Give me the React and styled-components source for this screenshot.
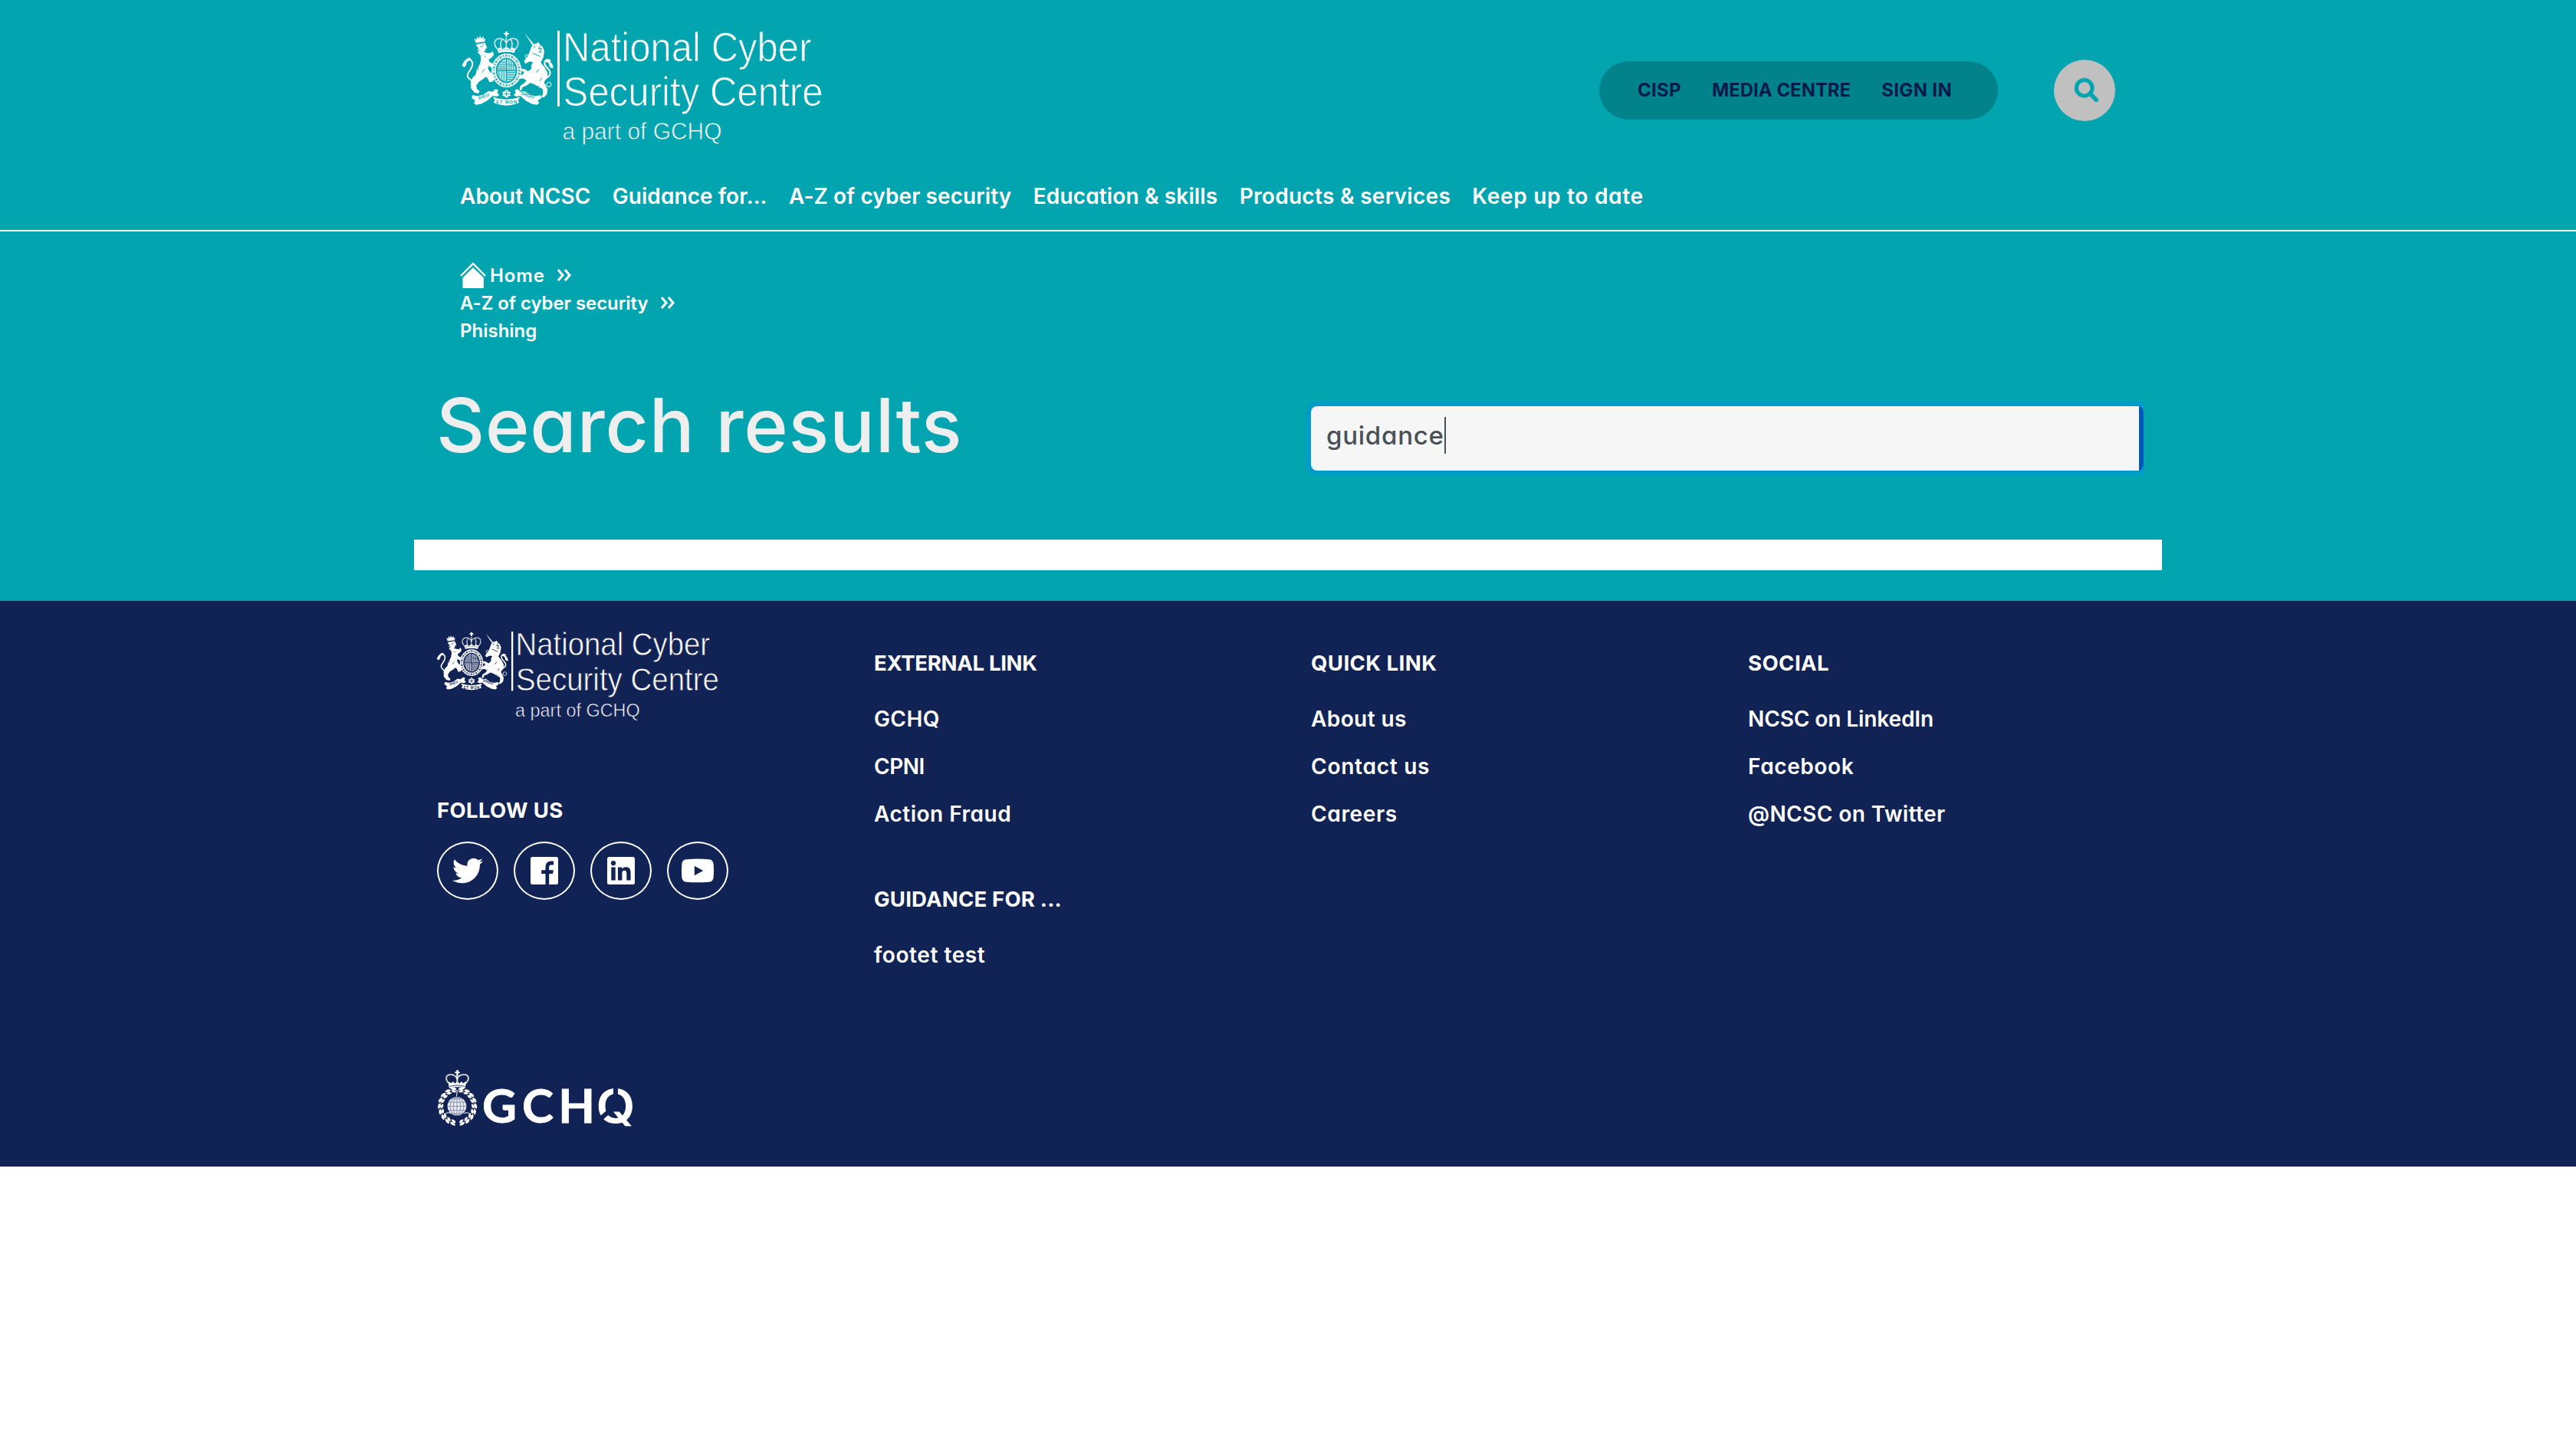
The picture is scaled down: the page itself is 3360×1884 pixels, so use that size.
import React from "react";
import styled, { createGlobalStyle } from "styled-components";
import { FaTwitter } from "react-icons/fa";

const teal = "#02a4b0";
const navy = "#112254";

const GlobalStyle = createGlobalStyle`
  *, *::before, *::after { box-sizing: border-box; }
  body {
    margin: 0;
    background: #fff;
    font-family: Inter, "Liberation Sans", sans-serif;
    font-feature-settings: "cv11" 1;
  }
`;

/* ---------- layout ---------- */

const Page = styled.div`
  display: flex;
  flex-direction: column;
`;

const Container = styled.div`
  width: 2280px;
  margin: 0 auto;
`;

const Header = styled.header`
  height: 302px;
  background: ${teal};
  border-bottom: 2px solid #fff;
`;

const TopRow = styled.div`
  display: flex;
  justify-content: space-between;
  align-items: center;
  height: 235px;
  padding: 40px 61px 39px 63px;
`;

const Actions = styled.div`
  display: flex;
  align-items: center;
  gap: 73px;
`;

const Pill = styled.nav`
  display: flex;
  align-items: center;
  gap: 40px;
  width: 520px;
  height: 76px;
  padding-left: 50px;
  border-radius: 38px;
  background: #02838c;
`;

const PillLink = styled.a`
  color: #001a4b;
  font-size: 23.8px;
  font-weight: 700;
  line-height: 36px;
  letter-spacing: ${(p) => p.$track}px;
  white-space: nowrap;
`;

const SearchButton = styled.button`
  width: 80px;
  height: 80px;
  padding: 0;
  border: 0;
  border-radius: 50%;
  background: #c0c0c0;
  svg { display: block; }
`;

const MainNav = styled.nav`
  display: flex;
  gap: 28.3px;
  padding-left: 60px;
`;

const NavLink = styled.a`
  color: #fff;
  font-size: 28px;
  font-weight: 600;
  line-height: 42px;
  letter-spacing: ${(p) => p.$track}px;
  white-space: nowrap;
`;

const Main = styled.main`
  height: 482px;
  padding-top: 39px;
  background: ${teal};
`;

const Crumbs = styled.ol`
  margin: 0;
  padding: 0 0 0 60px;
  list-style: none;
`;

const Crumb = styled.li`
  display: flex;
  align-items: center;
  height: 36px;
  color: #fff;
  font-size: 24px;
  font-weight: 600;
  letter-spacing: ${(p) => p.$track}px;
  svg { flex: none; }
`;

const HomeIcon = styled.svg`
  margin-right: 5px;
`;

const Chevrons = styled.svg`
  margin-left: 15px;
`;

const TitleRow = styled.div`
  display: flex;
  padding: 51px 24px 0 29px;
`;

const Title = styled.h1`
  width: 1141px;
  margin: 0;
  color: #eee;
  font-size: 98px;
  font-weight: 500;
  line-height: 110px;
  letter-spacing: 0.75px;
  white-space: nowrap;
`;

const SearchField = styled.div`
  display: flex;
  width: 1086px;
  height: 84px;
  margin-top: 30px;
`;

const FieldBox = styled.div`
  display: flex;
  align-items: center;
  width: 1080px;
  padding: 0 18px 8px 20px;
  border-radius: 8px 0 0 8px;
  background: #f6f6f6;
  box-shadow: 0 0 0 6px #009bc9;
  color: #495057;
  font-size: 33px;
  font-weight: 500;
  letter-spacing: 0.75px;
`;

const Caret = styled.span`
  width: 2px;
  height: 48px;
  background: #495057;
`;

const FieldEdge = styled.span`
  z-index: 1;
  width: 6px;
  border-radius: 0 8px 8px 0 / 0 14px 14px 0;
  background: #0058b6;
`;

const ResultsPanel = styled.section`
  width: 2280px;
  height: 40px;
  margin-top: 90px;
  background: #fff;
`;

const Footer = styled.footer`
  height: 738px;
  background: ${navy};
  color: #fff;
`;

const Columns = styled.div`
  display: grid;
  grid-template-columns: repeat(4, 570px);
  height: 612px;
`;

const Brand = styled.div`
  padding: 40px 30px 0;
`;

const Column = styled.div`
  display: flex;
  flex-direction: column;
  gap: 69px;
  padding: 60px 0 0 30px;
`;

const Heading = styled.h2`
  margin: ${(p) => p.$margin || "0 0 31px"};
  font-size: 27.5px;
  font-weight: 700;
  line-height: 42px;
  letter-spacing: ${(p) => p.$track}px;
  text-transform: uppercase;
  white-space: nowrap;
`;

const LinkList = styled.ul`
  display: flex;
  flex-direction: column;
  gap: 20px;
  margin: 0;
  padding: 0;
  list-style: none;
`;

const FooterLink = styled.a`
  display: block;
  font-size: 28px;
  font-weight: 600;
  line-height: 42px;
  letter-spacing: ${(p) => p.$track}px;
  white-space: nowrap;
`;

const Socials = styled.div`
  display: flex;
  gap: 20px;
`;

const SocialLink = styled.a`
  display: flex;
  align-items: center;
  justify-content: center;
  width: 80px;
  height: 76px;
  border: 2px solid #fff;
  border-radius: 50%;
  color: #fff;
`;

const BottomRow = styled.div`
  padding-left: 30px;
`;

const LogoSvg = styled.svg`
  display: block;
  overflow: visible;
  font-family: "Liberation Sans", Arial, sans-serif;
`;

const GchqSvg = styled.svg`
  display: block;
  overflow: visible;
  font-family: Lato, "Open Sans", sans-serif;
  font-weight: 700;
`;

/* ---------- drawings ---------- */

function Crest({ bg }) {
  return (
    <g transform="translate(-13 -10) scale(.33333)" fill="#fff" stroke="none">
      {/* lion */}
      <path d="M86 60l8 6 4-13 7 9 3-13 6 12 8-9 1 13 7-5-3 13-35 5z" />
      <path d="M93 84l34-7 5 10 4 12-8 2 2 8-9 3 14 5 16 1 3-7 6 4 2 10-8 10-12 8 4 10 14 7 9 12-14 4-14-9-1 13 7 11 13 9 4 15-5 14-14 3-5-13-8-9-12 10-16 10-10 14 2 14 11 9-5 9-16-4-13-17-1-25 8-17 11-10 4-19 14-25 3-21-6-17-8-4 6-6-7-6 6-7-7-6z" />
      <path d="M77 226c-12-8-20-14-17-25 4-14 18-22 19-39 1-14-9-22-18-17-8 5-10 13-9 20" fill="none" stroke="#fff" strokeWidth="6" />
      <path d="M38 165c7-14 16-27 29-29 7 1 5 9-1 12-10 3-14 12-15 23-5 3-10 0-13-6z" />
      <path d="M118 82l6 4M109 93l11-2M101 104l8 3M113 126l-3 8M127 128l2 7M103 175l-6 12M125 180l-8 14" stroke={bg} strokeWidth="2.5" />
      {/* unicorn */}
      <path d="M283 40l37 44-7 3z" />
      <path d="M311 90l9-7 13-4 3-5 6 9 12 11 6 16-4 25-10 20 15 18 12 22-1 18-13 18 5 14 9 15-3 19-11 12-12 1 7-13 1-17-13-13-21-9-16-5-13 9-17 7-5 13-7-2 3-16 16-11 8-11-14-7-15 3-3 9-9-5 3-12 18-7 11-9-6-8-14 3-10 4-3-7 17-9 18 1 14 9 12-10 1-16 6-10-14-2-15 8-6-6 2-9 12-12z" />
      <path d="M356 219c18-4 30-15 26-28-5-15-21-20-21-33 0-13 12-20 23-9" fill="none" stroke="#fff" strokeWidth="6" />
      <path d="M395 176c-1-15-10-27-25-33-8-1-8 7-2 10 10 2 13 9 12 18 5 5 12 7 15 5z" />
      <path d="M318 94l7-2M314 118l30 13M344 88l-7 14 13-2-10 14 12 0M338 181l-9 13M350 214l-8 13" fill="none" stroke={bg} strokeWidth="3" />
      <g fill="none" stroke="#fff" strokeWidth="3">
        <circle cx="291" cy="130" r="6" /><circle cx="302" cy="140" r="5" />
        <circle cx="331" cy="239" r="6" /><circle cx="344" cy="247" r="6" /><circle cx="378" cy="241" r="9" /><circle cx="360" cy="247" r="6" />
      </g>
      {/* crown */}
      <path d="M208 33h7v6h6v6h-6v8h-7v-8h-6v-6h6z" />
      <path d="M180 104c-20-14-19-43 5-43 15 0 24 9 26 18 3-9 12-18 28-18 23 0 24 29 5 43M211 57v46M195 66c-8 8-7 20-3 32M228 66c8 8 7 20 3 32" fill="none" stroke="#fff" strokeWidth="5" strokeDasharray="4 1.2" />
      <path d="M176 101l13-6 8 7 14-9 15 9 8-7 13 6-4 16q-32-7-63 0z" />
      <path d="M183 108q28-7 57 0" fill="none" stroke={bg} strokeWidth="2.5" strokeDasharray="6 4" />
      {/* garter and shield */}
      <ellipse cx="212" cy="186" rx="50" ry="58" fill={bg} stroke="#fff" strokeWidth="17" />
      <ellipse cx="212" cy="186" rx="50" ry="58" fill="none" stroke={bg} strokeWidth="9" strokeDasharray="3 6 5 3 2 5" />
      <ellipse cx="212" cy="186" rx="36" ry="44" fill="#fff" fillOpacity=".7" />
      <path d="M212 141v90M175 186h74" stroke={bg} strokeWidth="4" />
      <path d="M183 153h26M179 162h30M178 171h31M178 179h31M215 194h32M215 203h30M215 212h26M215 221h17" stroke={bg} strokeWidth="3" />
      <path d="M222 147v36M231 150v33M240 158v25M183 190v24M193 190v34M202 190v40M217 163l28 4" stroke={bg} strokeWidth="2.5" />
      {/* scrolls */}
      <path d="M78 283l22 3 20-5 22-15 15 3 11-10 12 3-4 12 8 8-10 6-16-3-20 18-26 14-20 3-8-7 6-9-14-10zM346 283l-22 3-20-5-22-15-15 3-11-10-12 3 4 12-8 8 10 6 16-3 20 18 26 14 20 3 8-7-6-9 14-10z" />
      <path d="M158 289l17 6q36 8 73 0l17-6-8 14 5 8-10 5q-40 14-80 0l-11-5 6-9z" />
      <path d="M212 255l9 12 11 2-5 9 5 8-11 2-9 9-9-9-11-2 5-8-5-9 11-2z" stroke={bg} strokeWidth="4" />
      <path d="M212 266v21M203 277h18" stroke={bg} strokeWidth="3" />
      <g fill={bg} fontFamily="Liberation Sans, sans-serif" fontWeight="700" fontSize="17">
        <text x="172" y="316" textLength="80">ET MON</text>
        <text x="104" y="301" textLength="44" transform="rotate(-20 104 301)">DIEU</text>
        <text x="268" y="279" textLength="54" transform="rotate(22 268 279)">DROIT</text>
      </g>
    </g>
  );
}

function NcscLogo({ width, bg }) {
  return (
    <LogoSvg width={width} height={(width * 156) / 470} viewBox="0 0 470 156">
      <Crest bg={bg} />
      <rect x="124" y="0" width="3" height="99" fill="#fff" />
      <g fill="#fff" stroke={bg} strokeWidth="1">
        <text x="131" y="40.2" fontSize="54.5" textLength="324.5" lengthAdjust="spacingAndGlyphs">National Cyber</text>
        <text x="131.6" y="98.2" fontSize="54.5" textLength="339" lengthAdjust="spacingAndGlyphs">Security Centre</text>
        <text x="130.5" y="142" fontSize="31.5" strokeWidth=".8" textLength="208" lengthAdjust="spacingAndGlyphs">a part of GCHQ</text>
      </g>
    </LogoSvg>
  );
}

function GchqLogo() {
  const leaves = [];
  for (let i = 0; i < 9; i += 1) {
    const a = 6 + i * 19;
    [1, -1].forEach((s) => {
      leaves.push(
        <g key={`${i}${s}`} transform={`translate(110 190) scale(${s} 1) rotate(${-a})`}>
          <path d="M0 76q4-16 22-12q-4 15-22 12z" />
          <path d="M0 66q2-14 18-12q-3 13-18 12z" />
        </g>
      );
    });
  }
  return (
    <GchqSvg width="262" height="74" viewBox="0 0 262 74" fill="#fff">
      <g transform="translate(-10 -16) scale(.33333)">
        <path d="M106 48h7v7h6v6h-6v8h-7v-8h-6v-6h6z" />
        <path d="M80 102c-20-14-17-36 3-36 14 0 23 8 26 18 3-10 12-18 27-18 20 0 23 22 3 36M109 66v36" fill="none" stroke="#fff" strokeWidth="6" strokeDasharray="5 1.3" />
        {leaves}
        <path d="M73 93l13 7 7-7 7 8 9-9 9 9 7-8 7 7 13-7-5 26q-30-8-62 0z" />
        <path d="M80 112q30-8 60 0" fill="none" stroke={navy} strokeWidth="2.5" />
        <path d="M101 122l8 9 9-9M109 130l-3 24M62 219q10-7 22-2M158 219q-10-7-22-2" fill="none" stroke="#fff" strokeWidth="3" />
        <circle cx="108" cy="190" r="37" fillOpacity=".9" />
        <g fill="none" stroke={navy} strokeWidth="1.6" strokeOpacity=".75">
          <path d="M108 153v74M71 190h74M75 174h66M75 206h66M84 161h48M84 219h48" />
          <ellipse cx="108" cy="190" rx="14" ry="37" />
          <ellipse cx="108" cy="190" rx="27" ry="37" />
        </g>
      </g>
      <text y="68.7" x="59 111 158.3" fontSize="62" stroke="#fff" strokeWidth=".8">GCH</text>
      <text y="68.7" x="207.5" fontSize="61" textLength="51" lengthAdjust="spacingAndGlyphs" fontFamily="Inter, sans-serif" fontWeight="600">Q</text>
      <path d="M233 20v15M224.5 54l-10.5 9" stroke={navy} strokeWidth="6" />
    </GchqSvg>
  );
}

function Arrows() {
  return (
    <Chevrons width="20" height="16" viewBox="0 0 20 16">
      <path d="M2 1l6 7-6 7M11 1l6 7-6 7" fill="none" stroke="#fff" strokeWidth="3" />
    </Chevrons>
  );
}

const FacebookMark = () => (
  <svg width="36" height="36" viewBox="0 0 36 36">
    <rect width="36" height="36" rx="2.5" fill="#fff" />
    <path fill={navy} d="M19.5 36V22h-5.3v-4.7h5.3v-4c0-5.3 3.2-7.9 7.6-7.9 1.4 0 2.5.1 3 .2v4.8h-3c-2.4 0-2.9 1.2-2.9 2.9v4h5.7l-.8 4.7h-4.9V36z" />
  </svg>
);

const LinkedInMark = () => (
  <svg width="36" height="36" viewBox="0 0 36 36">
    <rect width="36" height="36" rx="2.5" fill="#fff" />
    <circle cx="8" cy="8.2" r="3.1" fill={navy} />
    <path fill={navy} d="M5.3 13.6h5.4v17H5.3zM14 13.6h5.2v2.3c.9-1.6 2.7-2.7 5.2-2.7 5.1 0 6.2 3.3 6.2 7.9v9.5h-5.3v-8.4c0-2.2-.2-4.4-2.9-4.4s-3 2.2-3 4.3v8.5H14z" />
  </svg>
);

const YouTubeMark = () => (
  <svg width="44" height="32" viewBox="0 0 44 32">
    <path fill="#fff" d="M7 1.2Q22 0 37 1.2 42 1.6 42.6 7q1 9 0 18-.6 5.3-5.6 5.7-15 1.2-30 0-5-.4-5.6-5.7-1-9 0-18Q2 1.6 7 1.2z" />
    <path fill={navy} d="M17.8 9.7l11.4 6.3-11.4 6.3z" />
  </svg>
);

/* ---------- content ---------- */

const pillLinks = [["CISP", 0.4], ["MEDIA CENTRE", 0.1], ["SIGN IN", 0.45]];

const navLinks = [
  ["About NCSC", 0.07],
  ["Guidance for...", 0.07],
  ["A-Z of cyber security", 0.1],
  ["Education & skills", 0.14],
  ["Products & services", 0.3],
  ["Keep up to date", 0.72],
];

const footerColumns = [
  [
    { title: "External link", track: -0.3, links: [["GCHQ", 0.4], ["CPNI", -0.5], ["Action Fraud", 0.5]] },
    { title: "Guidance for ...", track: 0.2, links: [["footet test", 0.58]] },
  ],
  [{ title: "Quick link", track: 0.45, links: [["About us", 0.4], ["Contact us", 0.75], ["Careers", 0.65]] }],
  [{ title: "Social", track: 0.45, links: [["NCSC on LinkedIn", -0.1], ["Facebook", 0.6], ["@NCSC on Twitter", 0.42]] }],
];

export default function App() {
  return (
    <Page>
      <GlobalStyle />
      <Header>
        <Container>
          <TopRow>
            <NcscLogo width={470} bg={teal} />
            <Actions>
              <Pill>
                {pillLinks.map(([label, track]) => (
                  <PillLink key={label} $track={track}>{label}</PillLink>
                ))}
              </Pill>
              <SearchButton aria-label="Search">
                <svg width="80" height="80" viewBox="0 0 80 80" fill="none" stroke={teal}>
                  <circle cx="39.7" cy="36.7" r="10.3" strokeWidth="5.2" />
                  <path d="M47 44l8.2 8.2" strokeWidth="5.6" strokeLinecap="round" />
                </svg>
              </SearchButton>
            </Actions>
          </TopRow>
          <MainNav>
            {navLinks.map(([label, track]) => (
              <NavLink key={label} $track={track}>{label}</NavLink>
            ))}
          </MainNav>
        </Container>
      </Header>

      <Main>
        <Container>
          <Crumbs>
            <Crumb $track={0.9}>
              <HomeIcon width="34" height="34" viewBox="0 0 34 34">
                <path d="M1 18L17 2l16 16" fill="none" stroke="#fff" strokeWidth="2.4" />
                <path d="M17 7l14 13.5V34H3.5V20.5z" fill="#fff" />
              </HomeIcon>
              Home
              <Arrows />
            </Crumb>
            <Crumb $track={-0.08}>
              A-Z of cyber security
              <Arrows />
            </Crumb>
            <Crumb $track={0}>Phishing</Crumb>
          </Crumbs>
          <TitleRow>
            <Title>Search results</Title>
            <SearchField>
              <FieldBox>
                guidance
                <Caret />
              </FieldBox>
              <FieldEdge />
            </SearchField>
          </TitleRow>
          <ResultsPanel />
        </Container>
      </Main>

      <Footer>
        <Container>
          <Columns>
            <Brand>
              <NcscLogo width={367.5} bg={navy} />
              <Heading $track={0.35} $margin="90px 0 20px">Follow us</Heading>
              <Socials>
                <SocialLink><FaTwitter size={40} /></SocialLink>
                <SocialLink><FacebookMark /></SocialLink>
                <SocialLink><LinkedInMark /></SocialLink>
                <SocialLink><YouTubeMark /></SocialLink>
              </Socials>
            </Brand>
            {footerColumns.map((groups, i) => (
              <Column key={i}>
                {groups.map((group) => (
                  <div key={group.title}>
                    <Heading $track={group.track}>{group.title}</Heading>
                    <LinkList>
                      {group.links.map(([label, track]) => (
                        <li key={label}><FooterLink $track={track}>{label}</FooterLink></li>
                      ))}
                    </LinkList>
                  </div>
                ))}
              </Column>
            ))}
          </Columns>
          <BottomRow>
            <GchqLogo />
          </BottomRow>
        </Container>
      </Footer>
    </Page>
  );
}
